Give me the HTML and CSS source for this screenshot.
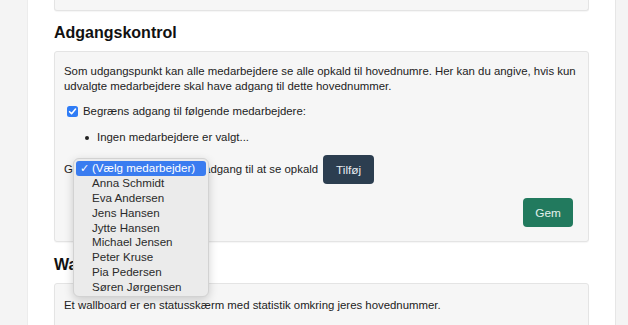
FILE: index.html
```html
<!DOCTYPE html>
<html lang="da">
<head>
<meta charset="utf-8">
<title>Adgangskontrol</title>
<link rel="stylesheet" href="styles.css">
</head>
<body>
<div class="page">
  <main class="main">
    <div class="card card-top"></div>

    <h2 class="title">Adgangskontrol</h2>
    <section class="card card-access">
      <p class="intro">Som udgangspunkt kan alle medarbejdere se alle opkald til hovednumre. Her kan du angive, hvis kun<br>udvalgte medarbejdere skal have adgang til dette hovednummer.</p>
      <label class="check-row">
        <span class="checkbox"><svg viewBox="0 0 12 12" width="11" height="11"><path d="M2.8 6.2 L5 8.4 L9.3 3.4" fill="none" stroke="#fff" stroke-width="1.7" stroke-linecap="round" stroke-linejoin="round"/></svg></span>
        <span>Begræns adgang til følgende medarbejdere:</span>
      </label>
      <ul class="list">
        <li>Ingen medarbejdere er valgt...</li>
      </ul>
      <div class="add-row">
        <span>Giv</span>
        <span class="select-box" aria-label="(Vælg medarbejder)"></span>
        <span>adgang til at se opkald</span>
        <button class="btn btn-dark" type="button">Tilføj</button>
      </div>
      <div class="actions">
        <button class="btn btn-green" type="button">Gem</button>
      </div>

      <div class="popup">
        <div class="opt opt-selected"><span class="tick">✓</span>(Vælg medarbejder)</div>
        <div class="opt">Anna Schmidt</div>
        <div class="opt">Eva Andersen</div>
        <div class="opt">Jens Hansen</div>
        <div class="opt">Jytte Hansen</div>
        <div class="opt">Michael Jensen</div>
        <div class="opt">Peter Kruse</div>
        <div class="opt">Pia Pedersen</div>
        <div class="opt">Søren Jørgensen</div>
      </div>
    </section>

    <h2 class="title title-wall">Wallboard</h2>
    <section class="card card-wall">
      <p class="intro">Et wallboard er en statusskærm med statistik omkring jeres hovednummer.</p>
    </section>
  </main>
  <aside class="side"></aside>
</div>
</body>
</html>
```

FILE: styles.css
```css
* { box-sizing: border-box; }

html, body {
  margin: 0;
  padding: 0;
  height: 100%;
  overflow: hidden;
}

body {
  background: #f4f4f4;
  font-family: "Liberation Sans", Arial, Helvetica, sans-serif;
  font-size: 11.4px;
  line-height: 15px;
  color: #222;
}

.page {
  display: flex;
  height: 100%;
  padding-left: 27px;
}

.main {
  width: 589px;
  flex: none;
  background: #fff;
  border-left: 1px solid #ececec;
  border-right: 1px solid #e6e6e6;
  padding: 0 26px 0 26px;
  height: 100%;
}

.side {
  flex: 1;
  background: #f4f4f4;
}

.card {
  background: #f6f6f6;
  border: 1px solid #e4e4e4;
  border-radius: 3px;
  box-shadow: 0 1px 1px rgba(0, 0, 0, 0.04);
}

.card-top {
  height: 11px;
  border-top: none;
  border-radius: 0 0 3px 3px;
}

.title {
  margin: 12px 0 8px 0;
  font-size: 16px;
  line-height: 20px;
  font-weight: bold;
  color: #111;
}

.title-wall {
  margin-top: 13px;
}

.card-access {
  position: relative;
  height: 191px;
  padding: 12px 15px 0 9px;
}

.intro {
  margin: 0;
  white-space: nowrap;
}

.check-row {
  display: flex;
  align-items: center;
  gap: 5px;
  margin-top: 10px;
  padding-left: 3px;
}

.checkbox {
  width: 11px;
  height: 11px;
  border-radius: 2.5px;
  background: #2f7cf6;
  display: flex;
  align-items: center;
  justify-content: center;
}

.checkbox svg { display: block; }

.list {
  margin: 11px 0 0 0;
  padding-left: 0;
  list-style: none;
}

.list li {
  display: flex;
  align-items: center;
  padding-left: 21px;
}

.list li::before {
  content: "";
  width: 4px;
  height: 4px;
  border-radius: 50%;
  background: #222;
  margin-right: 8px;
}

.add-row {
  display: flex;
  align-items: center;
  gap: 4px;
  margin-top: 10px;
}

.select-box {
  width: 113px;
  height: 20px;
  border: 1px solid #cfcfcf;
  border-radius: 4px;
  background: #fff;
  margin: 0 1px;
}

.btn {
  font-family: inherit;
  font-size: 11.8px;
  border: none;
  border-radius: 4px;
  height: 29px;
  padding: 0;
  cursor: pointer;
}

.btn-dark {
  width: 51px;
  margin-left: 1px;
  background: #2c3e50;
  color: #e8edf2;
}

.actions {
  display: flex;
  justify-content: flex-end;
  margin-top: 14px;
}

.btn-green {
  width: 50px;
  background: #227a5e;
  color: #e3f1ec;
}

.popup {
  position: absolute;
  left: 18px;
  top: 106px;
  width: 136px;
  height: 139px;
  background: #ebebeb;
  border: 1px solid #d2d2d2;
  border-radius: 6px;
  box-shadow: 0 3px 10px rgba(0, 0, 0, 0.18);
  padding: 2px 2px 0 2px;
  z-index: 5;
}

.opt {
  position: relative;
  height: 14.9px;
  line-height: 14.9px;
  padding-left: 16px;
  font-size: 11.6px;
  color: #2a2a2a;
  white-space: nowrap;
}

.opt-selected {
  background: #3a7cf0;
  color: #fff;
  border-radius: 3px;
}

.tick {
  position: absolute;
  left: 4px;
  top: 0;
  font-size: 11px;
}

.card-wall {
  height: 60px;
  padding: 14px 15px 0 9px;
}
```
